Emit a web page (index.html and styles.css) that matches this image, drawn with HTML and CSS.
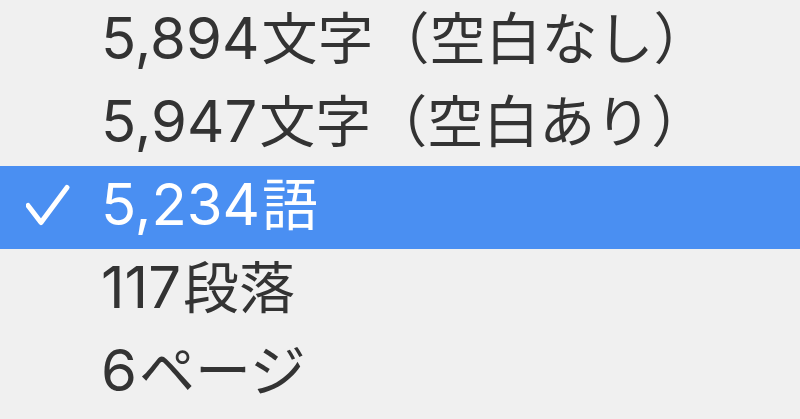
FILE: index.html
```html
<!DOCTYPE html>
<html lang="ja">
<head>
<meta charset="utf-8">
<link rel="stylesheet" href="styles.css">
</head>
<body>
<div class="menu">
  <div class="item"><span class="check"></span><span class="label">5,894<span class="ja">文字（空白なし）</span></span></div>
  <div class="item"><span class="check"></span><span class="label">5,947<span class="ja">文字（空白あり）</span></span></div>
  <div class="item selected"><span class="check"><svg viewBox="0 0 46 50" width="46" height="50"><path d="M2 22.5 L15 39.5 L41 4.5" fill="none" stroke="#fff" stroke-width="5" stroke-linecap="round" stroke-linejoin="round"/></svg></span><span class="label">5,234<span class="ja">語</span></span></div>
  <div class="item"><span class="check"></span><span class="label">117<span class="ja">段落</span></span></div>
  <div class="item"><span class="check"></span><span class="label">6<span class="ja">ページ</span></span></div>
</div>
</body>
</html>
```
FILE: styles.css
```css
html, body {
  margin: 0;
  padding: 0;
  background: #f0f0f0;
  width: 800px;
  height: 419px;
  overflow: hidden;
}
.menu {
  display: flex;
  flex-direction: column;
  font-family: Inter, "Noto Sans CJK JP", sans-serif;
  font-size: 58px;
  color: #333333;
}
.item {
  display: flex;
  align-items: center;
  height: 83px;
}
.check {
  width: 101px;
  display: flex;
  align-items: center;
  padding-left: 26px;
  box-sizing: border-box;
}
.label {
  line-height: 1.25;
  position: relative;
  top: -4px;
  white-space: nowrap;
}
.ja {
  font-family: "Noto Sans CJK JP", sans-serif;
  font-size: 56px;
  margin-left: 2px;
}
.selected {
  background: #4a8ff2;
  color: #ffffff;
}
```
